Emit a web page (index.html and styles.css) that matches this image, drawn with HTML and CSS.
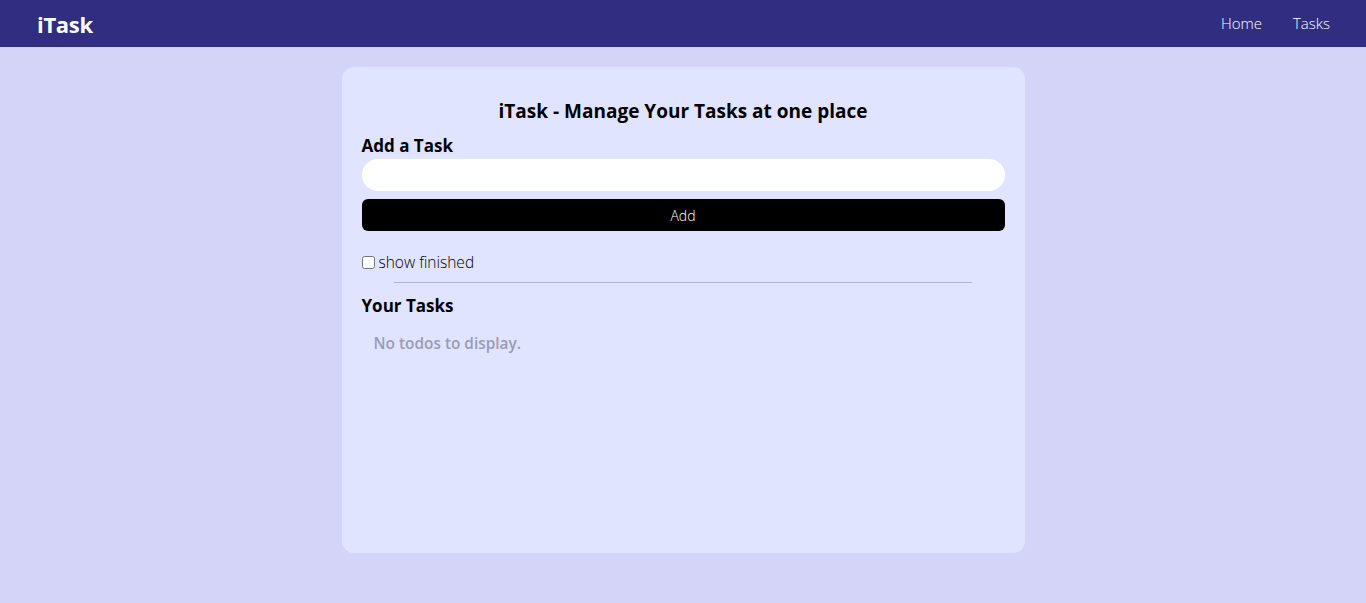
FILE: index.html
```html
<!DOCTYPE html>
<html>
<head>
<meta charset="utf-8">
<link rel="stylesheet" href="styles.css">
</head>
<body>
<nav class="navbar">
  <div class="logo">iTask</div>
  <ul class="nav-links">
    <li>Home</li>
    <li>Tasks</li>
  </ul>
</nav>
<main class="card">
  <h1 class="title">iTask - Manage Your Tasks at one place</h1>
  <section class="add">
    <h2 class="heading">Add a Task</h2>
    <input class="task-input" type="text">
    <button class="add-btn">Add</button>
  </section>
  <label class="finished"><input type="checkbox" class="check"> show finished</label>
  <div class="divider"></div>
  <h2 class="heading">Your Tasks</h2>
  <div class="empty">No todos to display.</div>
</main>
</body>
</html>
```
FILE: styles.css
```css
* { box-sizing: border-box; }
body {
  margin: 0;
  background: #d4d4f9;
  font-family: "Open Sans", "Noto Sans", sans-serif;
  color: #000;
  min-height: 603px;
}
.navbar {
  height: 47px;
  background: #312e81;
  color: #fff;
  display: flex;
  align-items: center;
  justify-content: space-between;
  padding: 0 36px 0 37px;
}
.logo {
  font-weight: 700;
  font-size: 22px;
  letter-spacing: -0.3px;
}
.nav-links {
  display: flex;
  gap: 31px;
  list-style: none;
  margin: 0;
  padding: 0 0 2px;
  font-size: 15px;
  font-weight: 300;
}
.card {
  width: 683px;
  margin: 20px auto 0;
  background: #e0e4fe;
  border-radius: 12px;
  padding: 20px;
  min-height: 486px;
  display: flex;
  flex-direction: column;
}
.title {
  margin: 0;
  text-align: center;
  font-size: 19px;
  font-weight: 700;
  line-height: 28px;
  margin-top: 10px;
}
.add {
  display: flex;
  flex-direction: column;
  gap: 8px;
  margin-top: 9px;
}
.heading {
  margin: 0;
  font-size: 17px;
  font-weight: 700;
  line-height: 24px;
}
.add .heading { margin-bottom: -7px; }
.task-input {
  width: 100%;
  height: 32px;
  border: none;
  border-radius: 999px;
  background: #fff;
  padding: 0 12px;
  outline: none;
}
.add-btn {
  height: 32px;
  border: none;
  border-radius: 6px;
  background: #000;
  color: #fff;
  font-family: inherit;
  font-size: 14px;
  font-weight: 300;
  cursor: pointer;
}
.finished {
  display: flex;
  align-items: center;
  gap: 4px;
  margin-top: 20px;
  font-size: 15.5px;
  font-weight: 300;
  line-height: 22px;
}
.check {
  margin: 0;
  width: 13px;
  height: 13px;
}
.divider {
  width: 90%;
  height: 1px;
  background: #b3b3d6;
  margin: 9px auto 11px;
}
.empty {
  margin: 15px 12px 0;
  font-size: 15.4px;
  color: #9a9cb4;
  font-weight: 600;
}
```
